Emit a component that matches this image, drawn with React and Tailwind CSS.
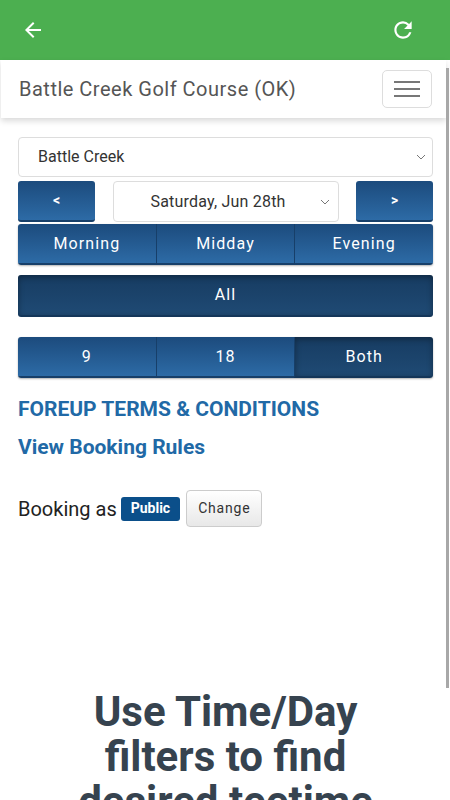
import React, { useState } from "react";
import { MdArrowBack, MdRefresh } from "react-icons/md";

const btnIdle =
  "bg-gradient-to-b from-[#1c4b7d] to-[#2d6ba6] border-b-2 border-[#173f69] text-white";
const btnActive =
  "bg-gradient-to-b from-[#173c62] to-[#1f4a74] border-b-2 border-[#143659] text-white shadow-[inset_0_2px_6px_rgba(0,0,0,0.35)]";

const Chevron = ({ className }) => (
  <svg className={className} width="10" height="6" viewBox="0 0 10 6" fill="none">
    <path d="M1 1l4 4 4-4" stroke="#777" strokeWidth="1" />
  </svg>
);

const Segmented = ({ items, active, onPick }) => (
  <div className="flex h-[41px] rounded-[3px] overflow-hidden shadow-[0_1px_2px_rgba(0,0,0,0.3)]">
    {items.map((it, id) => (
      <button
        key={it}
        onClick={() => onPick(it)}
        className={`flex-1 text-[16px] tracking-[1.1px] ${
          active === it ? btnActive : btnIdle
        } ${id > 0 && "border-l border-l-[#173f69]"}`}
      >
        {it}
      </button>
    ))}
  </div>
);

const App = () => {
  const [time, setTime] = useState(null);
  const [holes, setHoles] = useState("Both");

  return (
    <div className="relative w-[450px] h-[800px] overflow-hidden bg-white font-['Roboto',sans-serif]">
      {/* scrollbar */}
      <div className="absolute right-[1px] top-[68px] w-[3px] h-[620px] bg-[#a8a8a8]" />

      <div className="h-[60px] bg-[#4caf50] flex items-center justify-between pl-[21px] pr-[34px] text-white">
        <MdArrowBack size={24} />
        <MdRefresh size={26} />
      </div>

      <div className="w-[446px]">
        <div className="h-[58px] ml-[1px] flex items-center justify-between pl-[18px] pr-[14px] bg-white shadow-[0_3px_6px_rgba(0,0,0,0.15)]">
          <span className="text-[20px] text-[#555] tracking-[0.5px]">
            Battle Creek Golf Course (OK)
          </span>
          <div className="w-[50px] h-[38px] border border-[#ddd] rounded-[5px] flex flex-col items-center justify-center gap-[5px]">
            <span className="block w-[26px] h-[2px] bg-[#777]" />
            <span className="block w-[26px] h-[2px] bg-[#777]" />
            <span className="block w-[26px] h-[2px] bg-[#777]" />
          </div>
        </div>

        <div className="pl-[18px] pr-[13px] pt-[19px]">
          <div className="h-[40px] border border-[#ddd] rounded-[4px] flex items-center justify-between pl-[19px] pr-[6px]">
            <span className="text-[16px] text-[#333]">Battle Creek</span>
            <Chevron />
          </div>

          <div className="flex justify-between mt-[4px] h-[41px]">
            <button className={`w-[77px] rounded-[3px] text-[14px] font-bold ${btnIdle}`}>
              &lt;
            </button>
            <div className="w-[226px] border border-[#ddd] rounded-[4px] flex items-center justify-between pl-[37px] pr-[8px]">
              <span className="text-[16px] text-[#333] tracking-[0.2px]">Saturday, Jun 28th</span>
              <Chevron />
            </div>
            <button className={`w-[77px] rounded-[3px] text-[14px] font-bold ${btnIdle}`}>
              &gt;
            </button>
          </div>

          <div className="mt-[2px]">
            <Segmented
              items={["Morning", "Midday", "Evening"]}
              active={time}
              onPick={setTime}
            />
          </div>

          <button
            onClick={() => setTime(null)}
            className={`mt-[10px] w-full h-[42px] rounded-[3px] text-[16px] tracking-[1.1px] ${btnActive}`}
          >
            All
          </button>

          <div className="mt-[20px]">
            <Segmented items={["9", "18", "Both"]} active={holes} onPick={setHoles} />
          </div>

          <div className="mt-[19px] text-[21px] font-bold text-[#2169a6] leading-[24px]">
            FOREUP TERMS &amp; CONDITIONS
          </div>
          <div className="mt-[14px] text-[21px] font-bold text-[#2169a6] leading-[24px]">
            View Booking Rules
          </div>

          <div className="mt-[31px] flex items-center">
            <span className="text-[20px] text-[#222]">Booking as</span>
            <span className="ml-[4px] bg-[#0b4f8a] text-white text-[14px] font-bold rounded-[3px] px-[10px] h-[24px] flex items-center">
              Public
            </span>
            <button className="ml-[6px] h-[37px] px-[11px] border border-[#ccc] rounded-[4px] bg-gradient-to-b from-white to-[#e8e8e8] text-[14px] text-[#333] tracking-[0.8px]">
              Change
            </button>
          </div>

          <h1 className="mt-[162px] text-center text-[42px] font-bold leading-[45px] text-[#36434f] px-[30px]">
            Use Time/Day filters to find desired teetime
          </h1>
        </div>
      </div>
    </div>
  );
};

export default App;
